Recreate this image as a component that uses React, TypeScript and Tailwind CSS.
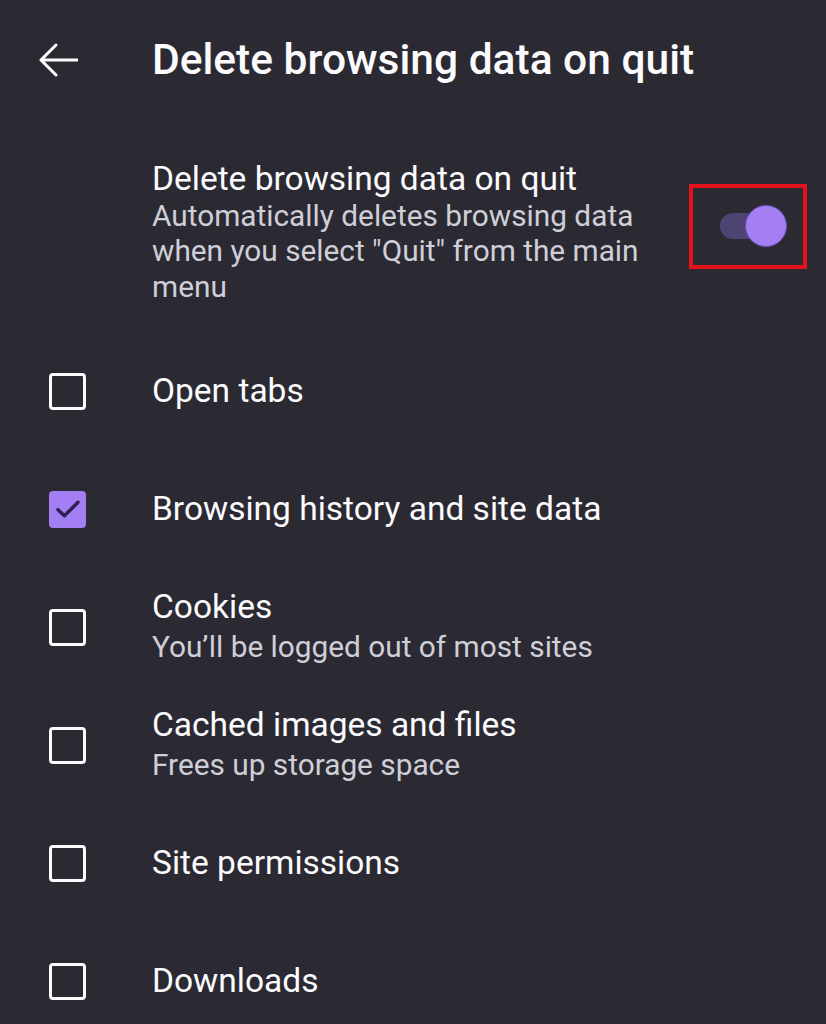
import React, { useState } from 'react';

type Item = {
  label: string;
  hint?: string;
  checked: boolean;
};

const initialItems: Item[] = [
  { label: 'Open tabs', checked: false },
  { label: 'Browsing history and site data', checked: true },
  { label: 'Cookies', hint: 'You\u2019ll be logged out of most sites', checked: false },
  { label: 'Cached images and files', hint: 'Frees up storage space', checked: false },
  { label: 'Site permissions', checked: false },
  { label: 'Downloads', checked: false },
];

function Checkbox({ checked }: { checked: boolean }) {
  if (checked) {
    return (
      <div className="flex h-[37px] w-[37px] items-center justify-center rounded-[4px] bg-[#a47ef3]">
        <svg viewBox="0 0 24 24" className="h-[32px] w-[32px]" fill="none">
          <path d="M4.5 12.5l4.8 4.6L19.5 7" stroke="#2e2350" strokeWidth="2.6" strokeLinecap="round" strokeLinejoin="round" />
        </svg>
      </div>
    );
  }
  return <div className="h-[37px] w-[37px] rounded-[4px] border-[3.5px] border-[#fbfbfe]" />;
}

export default function App() {
  const [items, setItems] = useState(initialItems);
  const [enabled, setEnabled] = useState(true);

  const toggle = (i: number) =>
    setItems(prev => prev.map((it, idx) => (idx === i ? { ...it, checked: !it.checked } : it)));

  return (
    <div className="min-h-[1024px] w-full bg-[#2b2a33] text-[#fbfbfe]" style={{ fontFamily: 'Roboto, "Noto Sans", sans-serif' }}>
      {/* header */}
      <div className="flex h-[120px] items-center">
        <div className="flex w-[152px] pl-[38px]">
          <svg viewBox="0 0 40 36" className="h-[36px] w-[40px]" fill="none">
            <path d="M39 18H3M18 3L3 18l15 15" stroke="#fbfbfe" strokeWidth="3" strokeLinecap="round" strokeLinejoin="round" />
          </svg>
        </div>
        <h1 className="whitespace-nowrap text-[42.5px] font-medium leading-none">Delete browsing data on quit</h1>
      </div>

      {/* main switch */}
      <div className="flex h-[212px] items-center pl-[152px] pr-[19px]">
        <div className="flex-1 pt-[12px]">
          <div className="whitespace-nowrap text-[33.5px] leading-[38px]">Delete browsing data on quit</div>
          <div className="w-[510px] text-[29.8px] leading-[35.5px] text-[#cfcfd8]">
            Automatically deletes browsing data when you select "Quit" from the main menu
          </div>
        </div>
        <div className="flex h-[85px] w-[118px] shrink-0 items-center justify-center border-[4px] border-[#e3131b] pl-[10px]">
          <button onClick={() => setEnabled(!enabled)} className="relative h-[42px] w-[67px]">
            <span className="absolute left-0 top-[8px] h-[26px] w-[60px] rounded-full bg-[#4d4474]" />
            <span
              className={
                enabled
                  ? 'absolute right-0 top-0 h-[42px] w-[42px] rounded-full border border-[#6b4fb5] bg-[#a47ef3]'
                  : 'absolute left-0 top-0 h-[42px] w-[42px] rounded-full bg-[#cfcfd8]'
              }
            />
          </button>
        </div>
      </div>

      {/* options */}
      <div className="flex flex-col">
        {items.map((it, i) => (
          <div key={it.label} onClick={() => toggle(i)} className="flex h-[118px] items-center">
            <div className="flex w-[152px] shrink-0 pl-[49px]">
              <Checkbox checked={it.checked} />
            </div>
            <div className="flex flex-col">
              <span className="whitespace-nowrap text-[33.5px] leading-[40px]">{it.label}</span>
              {it.hint && (
                <span className="whitespace-nowrap text-[29.8px] leading-[40px] text-[#cfcfd8]">{it.hint}</span>
              )}
            </div>
          </div>
        ))}
      </div>
    </div>
  );
}
